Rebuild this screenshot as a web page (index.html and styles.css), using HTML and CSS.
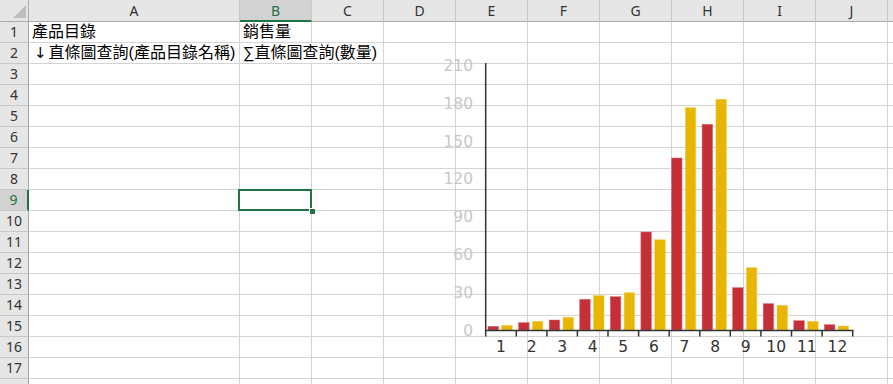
FILE: index.html
```html
<!DOCTYPE html>
<html lang="zh-Hant">
<head>
  <meta charset="UTF-8">
  <title>銷售量 - 直條圖查詢</title>
  <link rel="stylesheet" href="styles.css">
</head>
<body>
  <div class="sheet">
    <div class="ch corner"></div><div class="ch">A</div><div class="ch sel">B</div><div class="ch">C</div><div class="ch">D</div><div class="ch">E</div><div class="ch">F</div><div class="ch">G</div><div class="ch">H</div><div class="ch">I</div><div class="ch">J</div><div class="ch"></div>

    <div class="rh">1</div><div class="cell">產品目錄</div><div class="cell">銷售量</div><div></div><div></div><div></div><div></div><div></div><div></div><div></div><div></div><div></div>
    <div class="rh">2</div><div class="cell"><span class="arrow">↓</span>直條圖查詢(產品目錄名稱)</div><div class="cell wide">∑直條圖查詢(數量)</div><div></div><div></div><div></div><div></div><div></div><div></div><div></div><div></div>
    <div class="rh">3</div><div></div><div></div><div></div><div></div><div></div><div></div><div></div><div></div><div></div><div></div><div></div>
    <div class="rh">4</div><div></div><div></div><div></div><div></div><div></div><div></div><div></div><div></div><div></div><div></div><div></div>
    <div class="rh">5</div><div></div><div></div><div></div><div></div><div></div><div></div><div></div><div></div><div></div><div></div><div></div>
    <div class="rh">6</div><div></div><div></div><div></div><div></div><div></div><div></div><div></div><div></div><div></div><div></div><div></div>
    <div class="rh">7</div><div></div><div></div><div></div><div></div><div></div><div></div><div></div><div></div><div></div><div></div><div></div>
    <div class="rh">8</div><div></div><div></div><div></div><div></div><div></div><div></div><div></div><div></div><div></div><div></div><div></div>
    <div class="rh sel">9</div><div></div><div class="active"></div><div></div><div></div><div></div><div></div><div></div><div></div><div></div><div></div><div></div>
    <div class="rh">10</div><div></div><div></div><div></div><div></div><div></div><div></div><div></div><div></div><div></div><div></div><div></div>
    <div class="rh">11</div><div></div><div></div><div></div><div></div><div></div><div></div><div></div><div></div><div></div><div></div><div></div>
    <div class="rh">12</div><div></div><div></div><div></div><div></div><div></div><div></div><div></div><div></div><div></div><div></div><div></div>
    <div class="rh">13</div><div></div><div></div><div></div><div></div><div></div><div></div><div></div><div></div><div></div><div></div><div></div>
    <div class="rh">14</div><div></div><div></div><div></div><div></div><div></div><div></div><div></div><div></div><div></div><div></div><div></div>
    <div class="rh">15</div><div></div><div></div><div></div><div></div><div></div><div></div><div></div><div></div><div></div><div></div><div></div>
    <div class="rh">16</div><div></div><div></div><div></div><div></div><div></div><div></div><div></div><div></div><div></div><div></div><div></div>
    <div class="rh">17</div><div></div><div></div><div></div><div></div><div></div><div></div><div></div><div></div><div></div><div></div><div></div>
    <div class="rh"></div><div></div><div></div><div></div><div></div><div></div><div></div><div></div><div></div><div></div><div></div><div></div>

    <!-- chart floats over the grid, coordinates are sheet pixels -->
    <svg class="chart" viewBox="430 50 440 310" width="440" height="310">
      <g class="red">
        <rect x="488.0" y="326.3" width="10.5" height="3.7"/>
        <rect x="518.6" y="322.7" width="10.5" height="7.3"/>
        <rect x="549.2" y="320.0" width="10.5" height="10"/>
        <rect x="579.7" y="299.3" width="10.5" height="30.7"/>
        <rect x="610.3" y="296.7" width="10.5" height="33.3"/>
        <rect x="640.9" y="232.0" width="10.5" height="98"/>
        <rect x="671.5" y="158.0" width="10.5" height="172"/>
        <rect x="702.1" y="124.3" width="10.5" height="205.7"/>
        <rect x="732.6" y="287.7" width="10.5" height="42.3"/>
        <rect x="763.2" y="303.7" width="10.5" height="26.3"/>
        <rect x="793.8" y="320.7" width="10.5" height="9.3"/>
        <rect x="824.4" y="324.7" width="10.5" height="5.3"/>
      </g>
      <g class="yellow">
        <rect x="501.8" y="325.3" width="10.5" height="4.7"/>
        <rect x="532.4" y="321.3" width="10.5" height="8.7"/>
        <rect x="563.0" y="317.3" width="10.5" height="12.7"/>
        <rect x="593.5" y="295.7" width="10.5" height="34.3"/>
        <rect x="624.1" y="292.7" width="10.5" height="37.3"/>
        <rect x="654.7" y="239.7" width="10.5" height="90.3"/>
        <rect x="685.3" y="107.7" width="10.5" height="222.3"/>
        <rect x="715.9" y="99.3" width="10.5" height="230.7"/>
        <rect x="746.4" y="267.7" width="10.5" height="62.3"/>
        <rect x="777.0" y="305.3" width="10.5" height="24.7"/>
        <rect x="807.6" y="321.3" width="10.5" height="8.7"/>
        <rect x="838.2" y="326.0" width="10.5" height="4"/>
      </g>
      <g class="axis">
        <line x1="485.7" y1="63" x2="485.7" y2="331"/>
        <line x1="485" y1="330.5" x2="853.4" y2="330.5"/>
        <path d="M485.7 330v6.5M516.3 330v6.5M546.9 330v6.5M577.4 330v6.5M608 330v6.5M638.6 330v6.5M669.2 330v6.5M699.8 330v6.5M730.3 330v6.5M760.9 330v6.5M791.5 330v6.5M822.1 330v6.5M852.7 330v6.5"/>
      </g>
      <g class="ylabels">
        <text x="473" y="335.6">0</text>
        <text x="473" y="297.8">30</text>
        <text x="473" y="260">60</text>
        <text x="473" y="222.2">90</text>
        <text x="473" y="184.4">120</text>
        <text x="473" y="146.6">150</text>
        <text x="473" y="108.8">180</text>
        <text x="473" y="71">210</text>
      </g>
      <g class="xlabels">
        <text x="501" y="352">1</text>
        <text x="531.6" y="352">2</text>
        <text x="562.2" y="352">3</text>
        <text x="592.7" y="352">4</text>
        <text x="623.3" y="352">5</text>
        <text x="653.9" y="352">6</text>
        <text x="684.5" y="352">7</text>
        <text x="715.1" y="352">8</text>
        <text x="745.6" y="352">9</text>
        <text x="776.2" y="352">10</text>
        <text x="806.8" y="352">11</text>
        <text x="837.4" y="352">12</text>
      </g>
    </svg>
  </div>
</body>
</html>
```

FILE: styles.css
```css
body {
  margin: 0;
  width: 893px;
  height: 384px;
  overflow: hidden;
  background: #fff;
}

.sheet {
  position: relative;
  display: grid;
  grid-template-columns: 29px 211px repeat(10, 72px);
  grid-template-rows: 22px;
  grid-auto-rows: 21px;
  width: 893px;
  overflow: hidden;
  font-family: "Liberation Sans", "Noto Sans CJK TC", sans-serif;
  color: #000;
}

.sheet > div {
  box-sizing: border-box;
  border-right: 1px solid #d4d4d4;
  border-bottom: 1px solid #d4d4d4;
}

.ch, .rh {
  background: #e6e6e6;
  font-family: "Noto Sans", sans-serif;
  font-size: 14px;
  color: #333;
  text-align: center;
}

.sheet > .ch {
  line-height: 22px;
  border-right-color: #c8c8c8;
  border-bottom-color: #ababab;
}

.sheet > .rh {
  line-height: 20px;
  border-right-color: #a6a6a6;
  border-bottom-color: #c8c8c8;
}

.sheet > .ch.sel {
  background: #d2d2d2;
  color: #217346;
  border-bottom: 2px solid #217346;
}

.sheet > .rh.sel {
  background: #d2d2d2;
  color: #217346;
  border-right: 2px solid #217346;
}

.sheet > .corner {
  position: relative;
  border-right-color: #ababab;
}

.corner::after {
  content: "";
  position: absolute;
  right: 2px;
  bottom: 3px;
  width: 13px;
  height: 13px;
  background: #bdbdbd;
  clip-path: polygon(100% 0, 100% 100%, 0 100%);
}

.cell {
  font-size: 16px;
  line-height: 20px;
  padding-left: 3px;
  white-space: nowrap;
}

.arrow {
  font-family: "DejaVu Sans", sans-serif;
  font-size: 15px;
  padding-left: 2px;
  padding-right: 2px;
}

.sheet > .wide {
  grid-column: span 2;
}

.active {
  position: relative;
}

.active::after {
  content: "";
  position: absolute;
  left: -2px;
  top: -1px;
  right: -1px;
  bottom: -1px;
  border: 2px solid #217346;
}

.active::before {
  content: "";
  position: absolute;
  right: -4px;
  bottom: -4px;
  width: 5px;
  height: 5px;
  background: #217346;
  border-left: 1px solid #fff;
  border-top: 1px solid #fff;
  z-index: 1;
}

.chart {
  position: absolute;
  left: 430px;
  top: 50px;
  overflow: visible;
}

.red rect {
  fill: #c42f38;
  stroke: #d9666d;
  stroke-width: 0.5;
}

.yellow rect {
  fill: #e8b500;
  stroke: #f2cf55;
  stroke-width: 0.5;
}

.axis line, .axis path {
  stroke: #333;
  stroke-width: 1.5;
  fill: none;
}

.ylabels text {
  font-family: "DejaVu Sans", sans-serif;
  font-size: 15.5px;
  fill: #c8c8c8;
  text-anchor: end;
}

.xlabels text {
  font-family: "DejaVu Sans", sans-serif;
  font-size: 15.5px;
  fill: #333;
  text-anchor: middle;
}
```
